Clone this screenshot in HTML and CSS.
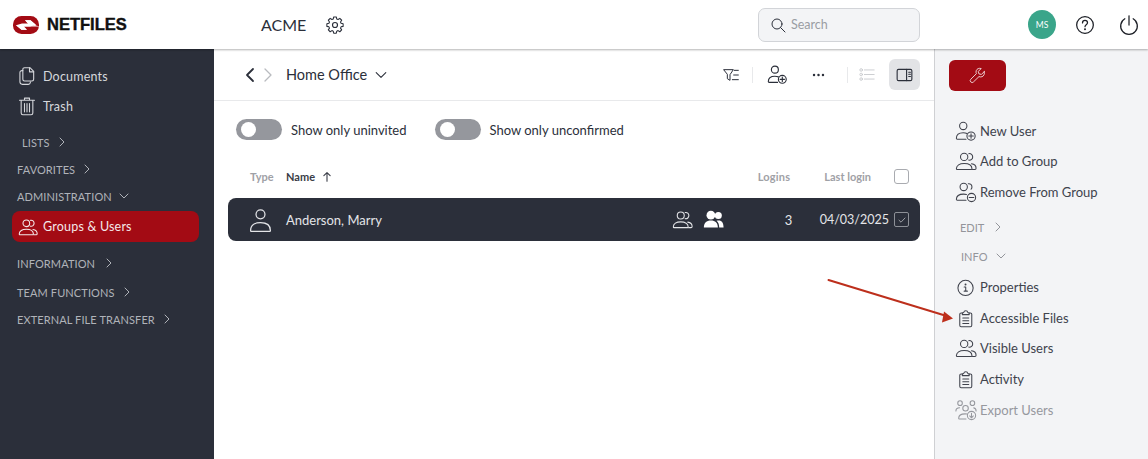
FILE: index.html
```html
<!DOCTYPE html>
<html lang="en">
<head>
<meta charset="utf-8">
<title>Netfiles - Groups &amp; Users</title>
<link rel="stylesheet" href="styles.css">
</head>
<body>
<svg class="defs" width="0" height="0" aria-hidden="true">
  <symbol id="i-user" viewBox="0 0 24 24"><circle cx="12" cy="7" r="4.3"/><path d="M2.5 22.5c0-5 4-7.5 9.500-7.500s9.500 2.500 9.500 7.500c0 .6-.4 1-1 1h-17c-.6 0-1-.4-1-1z"/></symbol>
  <symbol id="i-users" viewBox="0 0 24 24"><circle cx="10" cy="7.500" r="4"/><path d="M15 4c2.400-.5 4.300 1.300 4.300 3.500S17.400 11.500 15 11"/><path d="M1.500 20.500c0-3.800 3.500-5.800 8.500-5.800s8.500 2 8.500 5.800c0 .5-.3.800-.8.800H2.300c-.5 0-.8-.3-.8-.8z"/><path d="M18 15c3 .4 5 2.200 5 5 0 .8-.4 1.300-1.200 1.300H19"/></symbol>
  <symbol id="i-user-add" viewBox="0 0 24 24"><circle cx="9" cy="6.500" r="4"/><path d="M1.500 20c0-3.800 3-6 7.500-6 1.500 0 2.800.2 4 .7M1.500 20c0 .6.300 1 .9 1H12"/><circle cx="17.500" cy="17.500" r="4.500"/><path d="M17.500 15v5M15 17.500h5"/></symbol>
  <symbol id="i-users-remove" viewBox="0 0 24 24"><circle cx="9.500" cy="6.500" r="4"/><path d="M14.500 3c2.300-.4 4 1.300 4 3.500 0 1-.3 1.800-1 2.500"/><path d="M1.500 20c0-3.800 3.200-5.700 8-5.700 1 0 2 .1 3 .4M1.500 20c0 .6.300 1 .9 1H12"/><circle cx="18" cy="18" r="4.500"/><path d="M15.500 18h5"/></symbol>
  <symbol id="i-info" viewBox="0 0 24 24"><circle cx="11.500" cy="13" r="8.300"/><path d="M10 12h1.700v4.500M10 16.500h3.500"/><circle cx="11.500" cy="9.300" r=".5"/></symbol>
  <symbol id="i-clip" viewBox="0 0 24 24"><path d="M8 6.500H6.700A1.500 1.500 0 0 0 5.200 8v12A1.500 1.500 0 0 0 6.700 21.500h10.100a1.500 1.500 0 0 0 1.500-1.500V8a1.500 1.500 0 0 0-1.500-1.500H15.500"/><path d="M8 8.300h7.500V6.500l-1.500-.5C13.800 4.800 13 4 11.750 4S9.700 4.800 9.500 6L8 6.500z"/><path d="M8.500 12h6.500M8.500 15h6.500M8.500 18h6.500"/></symbol>
  <symbol id="i-export" viewBox="0 0 24 24"><circle cx="5.500" cy="4.500" r="2.500"/><circle cx="19" cy="4.500" r="2.500"/><circle cx="11.500" cy="10" r="3"/><path d="M1 13c0-2 1.500-3.500 4-3.500M23 13c0-1.800-1-3-2.500-3.300"/><path d="M4 21c0-3 2.500-4.800 7-4.800 .7 0 1.300 0 2 .2M4 21c0 .5.300.8.800.8H12"/><circle cx="18" cy="18" r="4.500"/><path d="M18 15.500v5M16 18.500l2 2 2-2"/></symbol>
  <symbol id="i-chev-r" viewBox="0 0 10 10"><path d="M3 1l4 4-4 4"/></symbol>
  <symbol id="i-chev-d" viewBox="0 0 10 10"><path d="M1 3l4 4 4-4"/></symbol>
</svg>

<div class="app">
  <header class="topbar">
    <div class="brand">
      <svg class="logo" viewBox="0 0 26 18" aria-hidden="true"><rect class="logo-body" width="26" height="18" rx="8.500"/><path class="logo-cut" d="M-1 7.600H15L12 4.200H17.500L23 8.800L17 10.400H9L14 13.800H8.500L3 9.200L9 7.600z"/><path class="logo-cut" d="M27 10.400H11L14 13.800H8.500L3 9.200H23L17.500 4.200H12L15 7.600z"/></svg>
      <span class="wordmark">NETFILES</span>
    </div>
    <span class="tenant">ACME</span>
    <svg class="gear" viewBox="0 0 24 24" aria-hidden="true"><circle cx="12" cy="12" r="3"/><path d="M10.300 2.500h3.400l.6 2.700 1.700.7 2.300-1.500 2.400 2.400-1.500 2.300.7 1.700 2.700.6v3.400l-2.700.6-.7 1.700 1.500 2.300-2.400 2.400-2.300-1.500-1.700.7-.6 2.700h-3.400l-.6-2.700-1.700-.7-2.300 1.500-2.400-2.400 1.500-2.300-.7-1.700-2.700-.6v-3.400l2.700-.6.7-1.700-1.500-2.300 2.400-2.400 2.300 1.500 1.700-.7z" transform="translate(12 12) scale(.92) translate(-12 -13)"/></svg>
    <div class="search">
      <svg class="search-icon" viewBox="0 0 24 24" aria-hidden="true"><circle cx="10.500" cy="10.500" r="7.500"/><path d="M16 16l6.500 6.500"/></svg>
      <span>Search</span>
    </div>
    <div class="avatar">MS</div>
    <svg class="top-icon help" viewBox="0 0 24 24" aria-hidden="true"><circle cx="12" cy="12" r="10"/><path d="M9 9.500c0-1.800 1.300-3 3-3s3 1.200 3 2.800c0 2.400-3 2.400-3 4.700"/><circle cx="12" cy="17" r=".5"/></svg>
    <svg class="top-icon power" viewBox="0 0 24 24" aria-hidden="true"><path d="M7 4.500a10 10 0 1 0 10 0"/><path d="M12 1v11"/></svg>
  </header>

  <div class="body">
    <nav class="sidebar">
      <a class="nav-item nav-docs"><svg class="ico" viewBox="0 0 24 24" aria-hidden="true"><path d="M9 2h6.500L20 6.500V16a2 2 0 0 1-2 2H9a2 2 0 0 1-2-2V4a2 2 0 0 1 2-2z"/><path d="M15 2v5h5"/><path d="M7 5.500H6a2.500 2.500 0 0 0-2.500 2.500v11A3 3 0 0 0 6.500 22h7a2.500 2.500 0 0 0 2.500-2v-1"/></svg>Documents</a>
      <a class="nav-item nav-trash"><svg class="ico" viewBox="0 0 24 24" aria-hidden="true"><path d="M3 5h18M9 5V2.500h6V5M5 5v15.500A2 2 0 0 0 7 22.500h10a2 2 0 0 0 2-2V5M9 9v10M12 9v10M15 9v10"/></svg>Trash</a>
      <div class="nav-head head-lists">LISTS<svg class="chev" aria-hidden="true"><use href="#i-chev-r"/></svg></div>
      <div class="nav-head head-fav">FAVORITES<svg class="chev" aria-hidden="true"><use href="#i-chev-r"/></svg></div>
      <div class="nav-head head-admin">ADMINISTRATION<svg class="chev" aria-hidden="true"><use href="#i-chev-d"/></svg></div>
      <a class="nav-item active"><svg class="ico" aria-hidden="true"><use href="#i-users"/></svg>Groups &amp; Users</a>
      <div class="nav-head head-info">INFORMATION<svg class="chev" aria-hidden="true"><use href="#i-chev-r"/></svg></div>
      <div class="nav-head head-team">TEAM FUNCTIONS<svg class="chev" aria-hidden="true"><use href="#i-chev-r"/></svg></div>
      <div class="nav-head head-ext">EXTERNAL FILE TRANSFER<svg class="chev" aria-hidden="true"><use href="#i-chev-r"/></svg></div>
    </nav>

    <main class="content">
      <div class="toolbar">
        <svg class="arrow-btn back" viewBox="0 0 10 16" aria-hidden="true"><path d="M8 2L2 8l6 6"/></svg>
        <svg class="arrow-btn forward" viewBox="0 0 10 16" aria-hidden="true"><path d="M2 2l6 6-6 6"/></svg>
        <span class="crumb">Home Office</span>
        <svg class="crumb-chev" aria-hidden="true"><use href="#i-chev-d"/></svg>
        <div class="tools">
          <svg class="tool filter" viewBox="0 0 24 20" aria-hidden="true"><path d="M1.500 2h14l-5 7.500v8.500l-4-2.500v-6z"/><path d="M17 3h6M16 10h7M14 17h9"/></svg>
          <span class="tool-sep"></span>
          <svg class="tool adduser" aria-hidden="true"><use href="#i-user-add"/></svg>
          <svg class="tool dots" viewBox="0 0 16 4" aria-hidden="true"><circle cx="2.500" cy="2" r="1.500"/><circle cx="8" cy="2" r="1.500"/><circle cx="13.500" cy="2" r="1.500"/></svg>
          <span class="tool-sep sep2"></span>
          <svg class="tool listview" viewBox="0 0 24 20" aria-hidden="true"><circle cx="3" cy="3" r="2"/><circle cx="3" cy="10" r="2"/><circle cx="3" cy="17" r="2"/><path d="M8 3h15M8 10h15M8 17h15"/></svg>
          <span class="panel-toggle"><svg viewBox="0 0 24 20" aria-hidden="true"><rect x="1.500" y="2" width="21" height="16" rx="2"/><path d="M15 2v16"/><path class="thin" d="M18 6h2.500M18 9h2.500M18 12h2.500"/></svg></span>
        </div>
      </div>

      <div class="filters">
        <label class="switch-row"><span class="switch"></span>Show only uninvited</label>
        <label class="switch-row"><span class="switch"></span>Show only unconfirmed</label>
      </div>

      <div class="table-head">
        <span class="th col-type">Type</span>
        <span class="th col-name">Name<svg class="sort" viewBox="0 0 12 14" aria-hidden="true"><path d="M6 13V2M2 6l4-4 4 4"/></svg></span>
        <span class="th col-logins">Logins</span>
        <span class="th col-last">Last login</span>
        <span class="check"></span>
      </div>
      <div class="row">
        <svg class="row-user" aria-hidden="true"><use href="#i-user"/></svg>
        <span class="row-name">Anderson, Marry</span>
        <svg class="row-ico" aria-hidden="true"><use href="#i-users"/></svg>
        <svg class="row-ico solid" viewBox="0 0 24 24" aria-hidden="true"><circle cx="9" cy="7" r="5"/><circle cx="17.500" cy="7.500" r="4"/><path d="M1 21c0-5 3-8 8-8s8 3 8 8zM18.500 21c0-3.500-1-6-3-7.500 .8-.3 1.500-.4 2.500-.4 3.500 0 5.500 3 5.500 7.900z"/></svg>
        <span class="row-logins">3</span>
        <span class="row-date">04/03/2025</span>
        <span class="row-check"><svg viewBox="0 0 10 10" aria-hidden="true"><path d="M2 5.200l2 2 4-4.200"/></svg></span>
      </div>
    </main>

    <aside class="panel">
      <button class="wrench" type="button" aria-label="Tools"><svg viewBox="0 0 24 24" aria-hidden="true"><path d="M21.500 6.500l-4 4-3.500-.8-.8-3.500 4-4c-3-1-6 .2-7 3-.5 1.500-.4 3 .2 4.200L2.500 17.300a2.700 2.700 0 0 0 0 3.800 2.700 2.700 0 0 0 3.800 0l7.800-7.600c1.300.6 2.800.7 4.200.2 2.900-1 4-4 3.200-7.200z"/></svg></button>
      <a class="act act-1"><svg class="act-ico" aria-hidden="true"><use href="#i-user-add"/></svg>New User</a>
      <a class="act act-2"><svg class="act-ico" aria-hidden="true"><use href="#i-users"/></svg>Add to Group</a>
      <a class="act act-3"><svg class="act-ico" aria-hidden="true"><use href="#i-users-remove"/></svg>Remove From Group</a>
      <div class="panel-head head-edit">EDIT<svg class="chev" aria-hidden="true"><use href="#i-chev-r"/></svg></div>
      <div class="panel-head head-pinfo">INFO<svg class="chev" aria-hidden="true"><use href="#i-chev-d"/></svg></div>
      <a class="act act-4"><svg class="act-ico" aria-hidden="true"><use href="#i-info"/></svg>Properties</a>
      <a class="act act-5"><svg class="act-ico" aria-hidden="true"><use href="#i-clip"/></svg>Accessible Files</a>
      <a class="act act-6"><svg class="act-ico" aria-hidden="true"><use href="#i-users"/></svg>Visible Users</a>
      <a class="act act-7"><svg class="act-ico" aria-hidden="true"><use href="#i-clip"/></svg>Activity</a>
      <a class="act act-7 disabled"><svg class="act-ico" aria-hidden="true"><use href="#i-export"/></svg>Export Users</a>
    </aside>
  </div>

  <svg class="annotation" viewBox="0 0 140 50" aria-hidden="true"><path class="shaft" d="M8.500 9L125 44.500"/><path class="head" d="M133 47.500L122 51.500L124 40.500z"/></svg>
</div>
</body>
</html>
```
FILE: styles.css
```css
* { box-sizing: border-box; }
html, body { margin: 0; height: 100%; background: #fff; }
body { font-family: "Lato", "Noto Sans", "Liberation Sans", sans-serif; color: #2b2f3a; overflow: hidden; }
.defs { position: absolute; }
svg { fill: none; stroke: currentColor; stroke-width: 1.5; stroke-linecap: round; stroke-linejoin: round; display: block; flex: none; }
a { color: inherit; text-decoration: none; }

.app { position: relative; width: 1148px; height: 459px; display: flex; flex-direction: column; overflow: hidden; }

/* top bar */
.topbar { height: 49px; flex: none; display: flex; align-items: center; padding-left: 13px; background: #fff; box-shadow: 0 1px 2px rgba(0,0,0,.3); position: relative; z-index: 2; }
.brand { display: flex; align-items: center; gap: 8px; width: 248px; }
.logo { width: 26px; height: 18px; stroke: none; }
.logo-body { fill: #a30b14; }
.logo-cut { fill: #fff; }
.wordmark { font: 700 16.500px "Liberation Sans", sans-serif; color: #111; -webkit-text-stroke: .4px #111; }
.tenant { font-size: 16px; color: #2b2f3a; width: 65px; }
.gear { width: 20px; height: 20px; stroke-width: 1.4; margin-left: -1px; }
.search { margin-left: 413px; width: 162px; height: 34px; border: 1px solid #d2d4d8; border-radius: 7px; background: #f3f4f6; display: flex; align-items: center; gap: 5px; padding-left: 11px; font-size: 12.500px; color: #9a9da3; }
.search-icon { width: 16px; height: 16px; color: #2b2f3a; }
.avatar { margin-left: 108px; width: 28px; height: 29px; border-radius: 50%; background: #3aa58a; color: #fff; font-size: 8.500px; display: flex; align-items: center; justify-content: center; }
.top-icon { width: 20px; height: 20px; color: #1c1f26; }
.help { margin-left: 19px; }
.power { margin-left: 24px; }

.body { flex: 1; display: flex; min-height: 0; }

/* sidebar */
.sidebar { width: 214px; flex: none; background: #2b2f3a; color: #d6d8dc; padding: 16px 15px 0 17px; display: flex; flex-direction: column; font-size: 12.500px; }
.nav-item { display: flex; align-items: center; gap: 6px; height: 22px; letter-spacing: .2px; }
.nav-item .ico { width: 20px; height: 20px; stroke-width: 1.3; }
.nav-trash { margin-top: 8px; }
.nav-head { display: flex; align-items: center; font-size: 11px; color: #b0b3b9; letter-spacing: .1px; height: 14px; }
.chev { width: 10px; height: 10px; margin-left: 7px; stroke-width: 1; }
.head-lists { margin: 18px 0 0 5px; }
.head-fav { margin-top: 13px; }
.head-admin { margin-top: 13px; }
.active { height: 31px; margin: 8px 0 0 -5px; padding-left: 6px; gap: 5px; background: #a30b14; color: #f4e8e9; border-radius: 8px; }
.head-info { margin-top: 14px; }
.head-info .chev { margin-left: 9px; }
.head-team { margin-top: 15px; }
.head-ext { margin-top: 13px; }

/* content */
.content { flex: 1; min-width: 0; background: #fff; display: flex; flex-direction: column; }
.toolbar { height: 52px; flex: none; display: flex; align-items: center; padding-left: 31px; border-bottom: 1px solid #e8e9eb; }
.arrow-btn { width: 10px; height: 16px; stroke-width: 1.800; }
.forward { margin-left: 8px; color: #b9bbbf; stroke-width: 1.300; }
.crumb { margin-left: 13px; font-size: 14.500px; }
.crumb-chev { width: 12px; height: 12px; margin-left: 8px; stroke-width: .9; }
.tools { margin-left: auto; display: flex; align-items: center; padding-right: 14px; }
.tool { flex: none; }
.filter { width: 16px; height: 14px; stroke-width: 1.500; }
.tool-sep { width: 1px; height: 16px; background: #e8e9eb; margin: 0 14px 0 13px; }
.adduser { width: 21px; height: 21px; stroke-width: 1.300; }
.dots { width: 13px; height: 4px; margin-left: 24px; fill: #2b2f3a; stroke: none; }
.sep2 { margin: 0 11px 0 22px; }
.listview { width: 16px; height: 13px; color: #c4c6ca; stroke-width: 1.300; }
.panel-toggle { width: 31px; height: 31px; margin-left: 14px; background: #e2e3e6; border-radius: 6px; display: flex; align-items: center; justify-content: center; }
.panel-toggle svg { width: 17px; height: 14px; stroke-width: 1.600; }
.panel-toggle .thin { stroke-width: 1.500; }

.filters { display: flex; align-items: center; padding: 18px 0 0 22px; font-size: 13px; color: #2b2f3a; }
.switch-row { display: flex; align-items: center; gap: 9px; margin-right: 28px; }
.switch { width: 46px; height: 21px; border-radius: 11px; background: #95979d; display: block; position: relative; }
.switch::after { content: ""; position: absolute; left: 5px; top: 3px; width: 15px; height: 15px; border-radius: 50%; background: #fff; }

.table-head { display: flex; align-items: center; height: 20px; margin-top: 26px; font-size: 11px; font-weight: 700; color: #9fa1a6; position: relative; }
.col-type { margin-left: 36px; width: 36px; }
.col-name { color: #3a3d47; display: flex; align-items: center; gap: 7px; }
.sort { width: 10px; height: 11px; stroke-width: 1.400; }
.col-logins { margin-left: auto; letter-spacing: .2px; }
.col-last { margin-left: 34px; }
.check { width: 15px; height: 15px; border: 1.500px solid #a9abb0; border-radius: 3px; margin: 0 25px 0 23px; }

.row { display: flex; align-items: center; height: 43px; margin: 12px 14px 0; border-radius: 8px; background: #2b2f3a; color: #e4e5e8; font-size: 13px; }
.row-user { width: 25px; height: 25px; margin-left: 20px; stroke-width: 1.200; }
.row-name { margin-left: 13px; }
.row-ico { width: 21px; height: 21px; margin-left: 10px; stroke-width: 1.200; }
.row-name + .row-ico { margin-left: auto; }
.row-ico.solid { fill: #fff; stroke: none; }
.row-logins { margin-left: 61px; width: 9px; }
.row-date { margin-left: 26px; font-size: 12.500px; }
.row-check { width: 15px; height: 15px; margin: 0 11px 0 5px; border: 1px solid #8d9097; border-radius: 2px; display: flex; align-items: center; justify-content: center; }
.row-check svg { width: 10px; height: 10px; stroke-width: .9; color: #a9abb0; }

/* right panel */
.panel { width: 214px; flex: none; background: #f3f4f6; border-left: 1px solid #cfd0d3; padding: 11px 0 0 14px; display: flex; flex-direction: column; font-size: 13px; color: #40434d; }
.wrench { width: 57px; height: 31px; border: 0; border-radius: 6px; background: #a30b14; color: #f0dcdd; display: flex; align-items: center; justify-content: center; padding: 0; }
.wrench svg { width: 17px; height: 17px; stroke-width: 1.300; }
.act { display: flex; align-items: center; gap: 3px; height: 22px; margin-left: 6px; }
.act-ico { width: 22px; height: 22px; stroke-width: 1.150; }
.act-1 { margin-top: 29px; }
.act-2 { margin-top: 8px; }
.act-3 { margin-top: 9px; }
.act-4 { margin-top: 13px; }
.act-5 { margin-top: 9px; }
.act-6 { margin-top: 8px; }
.act-7 { margin-top: 9px; }
.disabled { color: #96989e; }
.panel-head { display: flex; align-items: center; font-size: 11px; color: #93959b; height: 14px; }
.head-edit { margin-top: 17px; margin-left: 11px; }
.head-pinfo { margin-top: 15px; margin-left: 12px; }
.panel-head .chev { margin-left: 9px; }

.annotation { position: absolute; left: 820px; top: 271px; width: 140px; height: 50px; overflow: visible; }
.shaft { stroke: #bd2f1c; stroke-width: 2; }
.head { fill: #bd2f1c; stroke: none; }
```
